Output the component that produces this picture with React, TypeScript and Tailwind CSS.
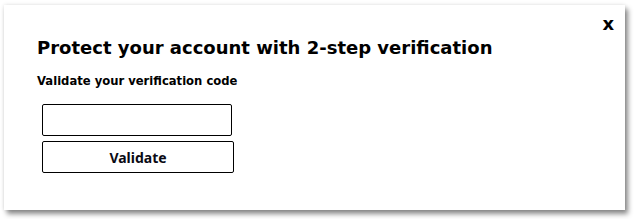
import React from "react";

export default function App() {
  return (
    <div className="w-[634px] h-[219px] bg-white pl-[4px] pt-[5px]">
      <div className="relative w-[621px] h-[205px] bg-white shadow-[3px_4px_5px_rgba(0,0,0,0.45),0_0_4px_rgba(0,0,0,0.12)]">
        <button
          className="absolute right-[11px] top-[10px] text-[18px] font-bold leading-none text-black"
          style={{ fontFamily: '"DejaVu Sans", Verdana, sans-serif' }}
        >
          x
        </button>
        <div
          className="flex flex-col pl-[33px] pt-[32px]"
          style={{ fontFamily: '"DejaVu Sans", Verdana, sans-serif' }}
        >
          <h1 className="text-[18px] font-bold leading-[22px] text-black">
            Protect your account with 2-step verification
          </h1>
          <p className="mt-[15px] text-[11.6px] font-bold leading-[14px] text-black">
            Validate your verification code
          </p>
          <div className="mt-[16px] ml-[5px] flex flex-col gap-[5px]">
            <input
              type="text"
              className="w-[190px] h-[32px] rounded-[2px] border border-black bg-white px-2 outline-none"
            />
            <button
              className="w-[192px] h-[32px] rounded-[2px] border border-black bg-white text-[14px] font-bold text-[#0a0a14]"
              style={{ fontFamily: '"Noto Sans", sans-serif' }}
            >
              Validate
            </button>
          </div>
        </div>
      </div>
    </div>
  );
}
